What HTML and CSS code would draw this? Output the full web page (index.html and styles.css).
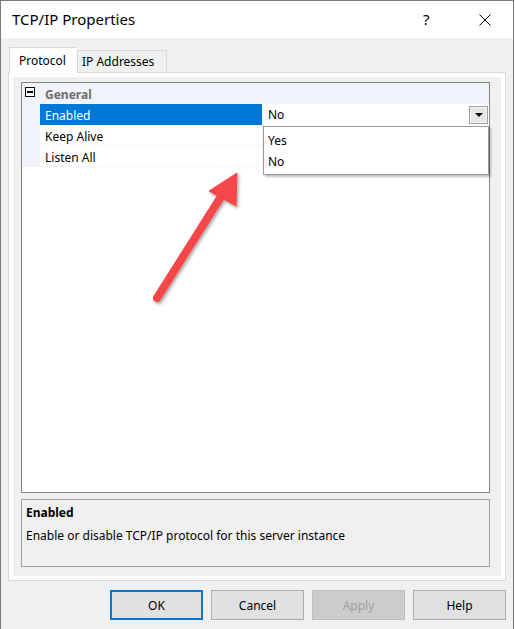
FILE: index.html
```html
<!DOCTYPE html>
<html>
<head>
<meta charset="utf-8">
<link rel="stylesheet" href="styles.css">
</head>
<body>
<div class="window">
  <div class="titlebar">
    <span class="title">TCP/IP Properties</span>
    <span class="help">?</span>
    <span class="close">
      <svg width="12" height="12" viewBox="0 0 12 12"><path d="M0.5 0.5 L11.5 11.5 M11.5 0.5 L0.5 11.5" stroke="#000" stroke-width="1" fill="none"/></svg>
    </span>
  </div>
  <div class="client">
    <div class="tabs">
      <div class="tab active">Protocol</div>
      <div class="tab">IP Addresses</div>
    </div>
    <div class="pane">
      <div class="page">
        <div class="grid">
          <div class="row cat">
            <span class="gutter"><span class="minus"></span></span>
            <span class="name">General</span>
          </div>
          <div class="row sel">
            <span class="gutter"></span>
            <span class="name">Enabled</span>
            <span class="value">No<span class="ddbtn"><span class="tri"></span></span></span>
          </div>
          <div class="row">
            <span class="gutter"></span>
            <span class="name">Keep Alive</span>
            <span class="value"></span>
          </div>
          <div class="row">
            <span class="gutter"></span>
            <span class="name">Listen All</span>
            <span class="value"></span>
          </div>
          <div class="dropdown">
            <div class="item">Yes</div>
            <div class="item">No</div>
          </div>
        </div>
        <div class="desc">
          <div class="desc-title">Enabled</div>
          <div class="desc-text">Enable or disable TCP/IP protocol for this server instance</div>
        </div>
      </div>
    </div>
    <div class="buttons">
      <button class="btn default">OK</button>
      <button class="btn">Cancel</button>
      <button class="btn disabled">Apply</button>
      <button class="btn">Help</button>
    </div>
  </div>
  <svg class="arrow" width="514" height="629" viewBox="0 0 514 629">
    <defs>
      <filter id="sh" x="-20%" y="-20%" width="150%" height="150%">
        <feDropShadow dx="1.5" dy="2" stdDeviation="1.5" flood-color="#000" flood-opacity="0.35"/>
      </filter>
    </defs>
    <g filter="url(#sh)" fill="#f4474a" stroke="#f4474a">
      <line x1="157" y1="298" x2="222" y2="195" stroke-width="8" stroke-linecap="round"/>
      <polygon points="237,173 209,191 236,206" stroke-width="1" stroke-linejoin="round"/>
    </g>
  </svg>
</div>
</body>
</html>
```
FILE: styles.css
```css
* { box-sizing: border-box; }
html, body { margin: 0; padding: 0; background: #ffffff; }
body { font-family: "Noto Sans", "Open Sans", sans-serif; font-size: 12px; color: #000; }

.window {
  position: relative;
  width: 514px;
  height: 629px;
  border: 1px solid #7a7a7a;
  border-bottom: none;
  background: #f0f0f0;
  display: flex;
  flex-direction: column;
  overflow: hidden;
}

.titlebar {
  height: 37px;
  background: #ffffff;
  display: flex;
  align-items: center;
  flex: none;
}
.title { font-size: 15px; margin-left: 11px; flex: 1; padding-bottom: 1px; }
.help { font-size: 15px; width: 14px; margin-right: 42px; padding-bottom: 1px; }
.close { width: 12px; height: 12px; margin-right: 22px; display: flex; }

.client { flex: 1; display: flex; flex-direction: column; padding-top: 9px; }

.tabs { display: flex; align-items: flex-end; margin-left: 8px; height: 25px; position: relative; z-index: 1; }
.tab {
  border: 1px solid #d9d9d9;
  border-bottom: none;
  background: #f0f0f0;
  height: 22px;
  line-height: 22px;
  padding: 0 5px 0 4px;
  width: 90px;
}
.tab.active {
  background: #ffffff;
  height: 26px;
  width: 68px;
  line-height: 26px;
  padding-left: 9px;
  margin-bottom: -1px;
  border-right: none;
}

.pane {
  margin-left: 7px;
  width: 498px;
  height: 509px;
  border: 1px solid #d9d9d9;
  background: #ffffff;
  padding: 4px;
}
.page {
  height: 100%;
  background: #f0f0f0;
  padding: 5px 11px 9px 8px;
  display: flex;
  flex-direction: column;
}

.grid {
  position: relative;
  height: 411px;
  border: 1px solid #828282;
  background: #ffffff;
}
.row {
  display: flex;
  height: 21px;
  align-items: stretch;
  box-shadow: inset 0 -1px 0 #f3f5fa;
}
.gutter {
  width: 18px;
  background: #f0f3f9;
  flex: none;
  position: relative;
}
.minus {
  position: absolute;
  left: 3px;
  top: 4px;
  width: 10px;
  height: 10px;
  border: 1px solid #000;
  background: #fff;
}
.minus::after {
  content: "";
  position: absolute;
  left: 1px;
  right: 1px;
  top: 3px;
  height: 2px;
  background: #000;
}
.name {
  width: 222px;
  flex: none;
  padding-left: 5px;
  line-height: 23px;
  white-space: nowrap;
}
.value {
  flex: 1;
  border-left: 1px solid #f0f3f9;
  padding-left: 5px;
  line-height: 23px;
  display: flex;
  align-items: center;
  justify-content: space-between;
}
.row.cat { background: #f0f3f9; }
.row.cat .name { font-weight: bold; color: #6d6d6d; }
.row.sel .name { background: #0078d7; color: #ffffff; }
.row.sel .value { background: #ffffff; border-left-color: #ffffff; }

.ddbtn {
  width: 19px;
  height: 18px;
  margin-right: 1px;
  border: 1px solid #a0a0a0;
  background: #e6e6e6;
  box-shadow: inset 0 0 0 1px #f4f4f4;
  display: flex;
  align-items: center;
  justify-content: center;
}
.tri {
  width: 0;
  height: 0;
  border-left: 4px solid transparent;
  border-right: 4px solid transparent;
  border-top: 4px solid #000;
}

.dropdown {
  position: absolute;
  left: 241px;
  top: 43px;
  width: 226px;
  height: 49px;
  border: 1px solid #9a9a9a;
  background: #ffffff;
  box-shadow: 2px 2px 2px rgba(0,0,0,0.25);
  padding-top: 3px;
}
.item { height: 21px; line-height: 21px; padding-left: 4px; }

.desc {
  margin-top: 6px;
  height: 68px;
  border: 1px solid #a0a0a0;
  background: #f0f0f0;
  padding: 5px 4px;
}
.desc-title { font-weight: bold; line-height: 16px; }
.desc-text { margin-top: 7px; line-height: 16px; }

.buttons {
  display: flex;
  justify-content: flex-end;
  gap: 8px;
  margin-top: 9px;
  margin-right: 7px;
}
.btn {
  width: 93px;
  height: 30px;
  border: 1px solid #adadad;
  background: #e1e1e1;
  font-family: inherit;
  font-size: 12px;
  color: #000;
  padding: 0;
}
.btn.default { border: 2px solid #0078d7; }
.btn.disabled { background: #cccccc; border-color: #bfbfbf; color: #a0a0a0; }

.arrow {
  position: absolute;
  left: -1px;
  top: -1px;
  pointer-events: none;
}
```
